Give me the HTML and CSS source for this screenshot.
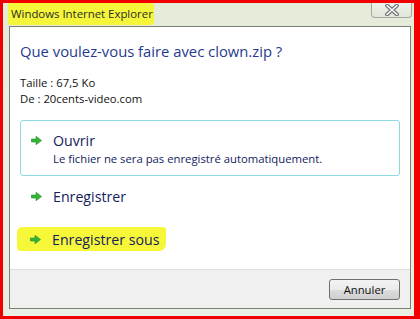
FILE: index.html
```html
<!DOCTYPE html>
<html lang="fr">
<head>
<meta charset="utf-8">
<title>Windows Internet Explorer</title>
<link rel="stylesheet" href="styles.css">
</head>
<body>
<div class="window">
  <div class="titlebar">
    <span class="title">Windows Internet Explorer</span>
    <div class="close">
      <svg width="16" height="12" viewBox="0 0 16 12">
        <path d="M3 1.5 L13 10.5 M13 1.5 L3 10.5" stroke="#6e7378" stroke-width="3.8" stroke-linecap="round" fill="none"/>
        <path d="M3 1.5 L13 10.5 M13 1.5 L3 10.5" stroke="#ffffff" stroke-width="1.5" stroke-linecap="round" fill="none"/>
      </svg>
    </div>
  </div>
  <div class="client">
    <div class="content">
      <h1 class="instruction">Que voulez-vous faire avec clown.zip ?</h1>
      <div class="meta">
        <div>Taille : 67,5 Ko</div>
        <div>De : 20cents-video.com</div>
      </div>
      <div class="cmd cmd-focus">
        <svg class="arrow" width="11" height="9" viewBox="0 0 11 9">
          <path d="M0.5 3 H5 V0.3 L10.5 4.5 L5 8.7 V6 H0.5 Z" fill="#33b533" stroke="#1f8a2a" stroke-width="0.6"/>
        </svg>
        <div class="cmd-text">
          <div class="cmd-label">Ouvrir</div>
          <div class="cmd-note">Le fichier ne sera pas enregistré automatiquement.</div>
        </div>
      </div>
      <div class="cmd">
        <svg class="arrow" width="11" height="9" viewBox="0 0 11 9">
          <path d="M0.5 3 H5 V0.3 L10.5 4.5 L5 8.7 V6 H0.5 Z" fill="#33b533" stroke="#1f8a2a" stroke-width="0.6"/>
        </svg>
        <div class="cmd-text">
          <div class="cmd-label">Enregistrer</div>
        </div>
      </div>
      <div class="cmd cmd-marked">
        <svg class="arrow" width="11" height="9" viewBox="0 0 11 9">
          <path d="M0.5 3 H5 V0.3 L10.5 4.5 L5 8.7 V6 H0.5 Z" fill="#33b533" stroke="#1f8a2a" stroke-width="0.6"/>
        </svg>
        <div class="cmd-text">
          <div class="cmd-label">Enregistrer sous</div>
        </div>
      </div>
    </div>
    <div class="footer">
      <button class="btn">Annuler</button>
    </div>
  </div>
</div>
</body>
</html>
```

FILE: styles.css
```css
html, body {
  margin: 0;
  padding: 0;
}
body {
  background: #f20000;
  width: 420px;
  height: 319px;
  overflow: hidden;
  font-family: "Open Sans", "Noto Sans", sans-serif;
}
.window {
  box-sizing: border-box;
  margin: 3px 6px 0 3px;
  height: 313px;
  background: linear-gradient(180deg, #e4ebd8 0%, #e8eee0 30%, #e9efe4 100%);
  display: flex;
  flex-direction: column;
  padding: 0 3px 7px 6px;
}
.titlebar {
  height: 23px;
  display: flex;
  align-items: flex-start;
  justify-content: space-between;
}
.title {
  margin: 0 0 0 -1px;
  padding: 3px 1px 4px 3px;
  background: #f5f53a;
  border-radius: 0 2px 3px 2px;
  font-size: 11.4px;
  color: #2b2b2b;
  line-height: 15px;
}
.close {
  width: 41px;
  height: 15px;
  margin-right: -1px;
  box-sizing: border-box;
  border: 1px solid #a4a9a0;
  border-top: none;
  border-radius: 0 0 4px 4px;
  background: linear-gradient(180deg, #eef2ea, #e0e6da);
  display: flex;
  align-items: center;
  justify-content: center;
}
.client {
  flex: 1;
  display: flex;
  flex-direction: column;
  border: 1px solid #7b8072;
  background: #ffffff;
}
.content {
  flex: 1;
  padding: 14px 10px 0 10px;
}
.instruction {
  margin: 0;
  font-weight: normal;
  font-size: 14.8px;
  line-height: 20px;
  color: #1f3b8e;
}
.meta {
  margin-top: 14px;
  font-size: 11.3px;
  line-height: 16px;
  color: #111;
}
.cmd {
  display: flex;
  align-items: flex-start;
  box-sizing: border-box;
  padding: 10px;
  border: 1px solid transparent;
  border-radius: 3px;
}
.cmd-focus {
  margin-top: 13px;
  height: 56px;
  border-color: #8ed9e2;
}
.arrow {
  margin-top: 5px;
  margin-right: 11px;
  flex: none;
}
.cmd-label {
  font-size: 14.2px;
  line-height: 20px;
  color: #15205e;
}
.cmd-note {
  font-size: 11.3px;
  line-height: 15px;
  color: #15205e;
}
.cmd-marked {
  width: fit-content;
  margin: 9px 0 0 -3px;
  padding: 3px 7px 1px 13px;
  border: none;
  background: #f7f73a;
  border-radius: 5px 3px 7px 4px;
}
.footer {
  height: 39px;
  border-top: 1px solid #dfdfdf;
  background: #f0f0f0;
  display: flex;
  justify-content: flex-end;
  align-items: flex-start;
  padding: 9px 10px 0 0;
  box-sizing: border-box;
}
.btn {
  width: 71px;
  height: 21px;
  border: 1px solid #707070;
  border-radius: 3px;
  background: linear-gradient(180deg, #f3f3f3 0%, #ebebeb 50%, #dddddd 51%, #cfcfcf 100%);
  font-family: "Open Sans", "Noto Sans", sans-serif;
  font-size: 11.3px;
  color: #111;
  padding: 0;
  line-height: 18px;
}
```
